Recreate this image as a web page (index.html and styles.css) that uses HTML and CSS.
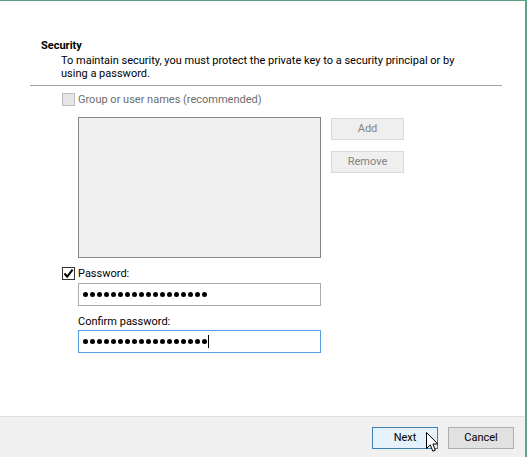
FILE: index.html
```html
<!DOCTYPE html>
<html>
<head>
<meta charset="utf-8">
<link rel="stylesheet" href="styles.css">
</head>
<body>
<div class="window">
  <div class="content">
    <div class="section-title">Security</div>
    <div class="desc">To maintain security, you must protect the private key to a security principal or by using a password.</div>
    <div class="separator"></div>
    <div class="check-row disabled">
      <span class="checkbox disabled-box"></span>
      <span class="check-label">Group or user names (recommended)</span>
    </div>
    <div class="group-area">
      <div class="listbox"></div>
      <div class="side-buttons">
        <div class="btn btn-disabled">Add</div>
        <div class="btn btn-disabled">Remove</div>
      </div>
    </div>
    <div class="check-row pw-row">
      <span class="checkbox checked">
        <svg width="11" height="11" viewBox="0 0 11 11"><path d="M1.5 5.5 L4.2 8.6 L9.6 1.6" fill="none" stroke="#000" stroke-width="2"/></svg>
      </span>
      <span class="check-label">Password:</span>
    </div>
    <div class="field">
      <div class="input"><span class="dots"><i></i><i></i><i></i><i></i><i></i><i></i><i></i><i></i><i></i><i></i><i></i><i></i><i></i><i></i><i></i><i></i><i></i><i></i></span></div>
      <div class="field-label">Confirm password:</div>
      <div class="input focused"><span class="dots"><i></i><i></i><i></i><i></i><i></i><i></i><i></i><i></i><i></i><i></i><i></i><i></i><i></i><i></i><i></i><i></i><i></i><i></i></span><span class="caret"></span></div>
    </div>
  </div>
  <div class="footer">
    <div class="btn btn-primary">Next
      <svg class="cursor" width="13" height="21" viewBox="0 0 13 21"><path d="M0.5 0.5 L0.5 16.5 L4.3 12.9 L6.8 19.2 L9.3 18.2 L6.9 12 L11.8 12 Z" fill="#fff" stroke="#000" stroke-width="1" stroke-linejoin="miter"/></svg>
    </div>
    <div class="btn btn-normal">Cancel</div>
  </div>
</div>
</body>
</html>
```

FILE: styles.css
```css
html, body {
  margin: 0;
  padding: 0;
  background: #fff;
}
body {
  font-family: Roboto, "Noto Sans", "Liberation Sans", sans-serif;
  font-size: 11px;
  color: #000;
}
.window {
  box-sizing: border-box;
  width: 527px;
  height: 457px;
  border-top: 1px solid #5b9f80;
  border-right: 2px solid #5ba582;
  display: flex;
  flex-direction: column;
  background: #fff;
}
.content {
  flex: 1;
  padding: 37px 23px 0 30px;
}
.section-title {
  font-weight: bold;
  line-height: 15px;
  padding-left: 11px;
}
.desc {
  margin-top: 1px;
  padding-left: 31px;
  line-height: 13px;
  width: 400px;
}
.separator {
  margin-top: 5px;
  height: 1px;
  background: #a0a0a0;
}
.check-row {
  display: flex;
  align-items: center;
  margin-top: 7px;
  margin-left: 32px;
  height: 13px;
}
.checkbox {
  box-sizing: border-box;
  width: 13px;
  height: 13px;
  border: 1px solid #333;
  background: #fff;
  display: flex;
  align-items: center;
  justify-content: center;
}
.disabled-box {
  border-color: #bcbcbc;
  background: #e6e6e6;
}
.check-label {
  margin-left: 3px;
  line-height: 13px;
}
.disabled .check-label {
  color: #6d6d6d;
}
.group-area {
  display: flex;
  margin-left: 48px;
  margin-top: 11px;
}
.listbox {
  box-sizing: border-box;
  width: 243px;
  height: 141px;
  background: #f0f0f0;
  border: 1px solid #858585;
}
.side-buttons {
  display: flex;
  flex-direction: column;
  gap: 11px;
  margin-left: 10px;
  margin-top: 1px;
}
.btn {
  box-sizing: border-box;
  display: flex;
  align-items: center;
  justify-content: center;
  line-height: 14px;
}
.btn-disabled {
  width: 73px;
  height: 22px;
  background: #efefef;
  border: 1px solid #d9d9d9;
  color: #838383;
}
.pw-row {
  margin-top: 9px;
}
.field {
  margin-left: 48px;
  margin-top: 3px;
}
.input {
  box-sizing: border-box;
  width: 243px;
  height: 23px;
  border: 1px solid #ababab;
  display: flex;
  align-items: center;
  padding-left: 4px;
}
.input.focused {
  border-color: #569de5;
  margin-top: 1px;
}
.field-label {
  margin-top: 8px;
  line-height: 15px;
}
.dots {
  display: flex;
  gap: 2px;
}
.dots i {
  display: block;
  width: 5px;
  height: 5px;
  border-radius: 50%;
  background: #000;
}
.caret {
  display: block;
  width: 1px;
  height: 13px;
  background: #000;
  margin-left: 1px;
}
.footer {
  box-sizing: border-box;
  height: 41px;
  border-top: 1px solid #dfdfdf;
  background: #f0f0f0;
  display: flex;
  justify-content: flex-end;
  align-items: flex-start;
  padding: 10px 11px 0 0;
  gap: 10px;
}
.btn-primary, .btn-normal {
  width: 66px;
  height: 22px;
}
.btn-primary {
  position: relative;
  background: #e5f1fb;
  border: 1px solid #3c7fb1;
}
.btn-normal {
  background: #e1e1e1;
  border: 1px solid #adadad;
}
.cursor {
  position: absolute;
  left: 53px;
  top: 4px;
}
```
